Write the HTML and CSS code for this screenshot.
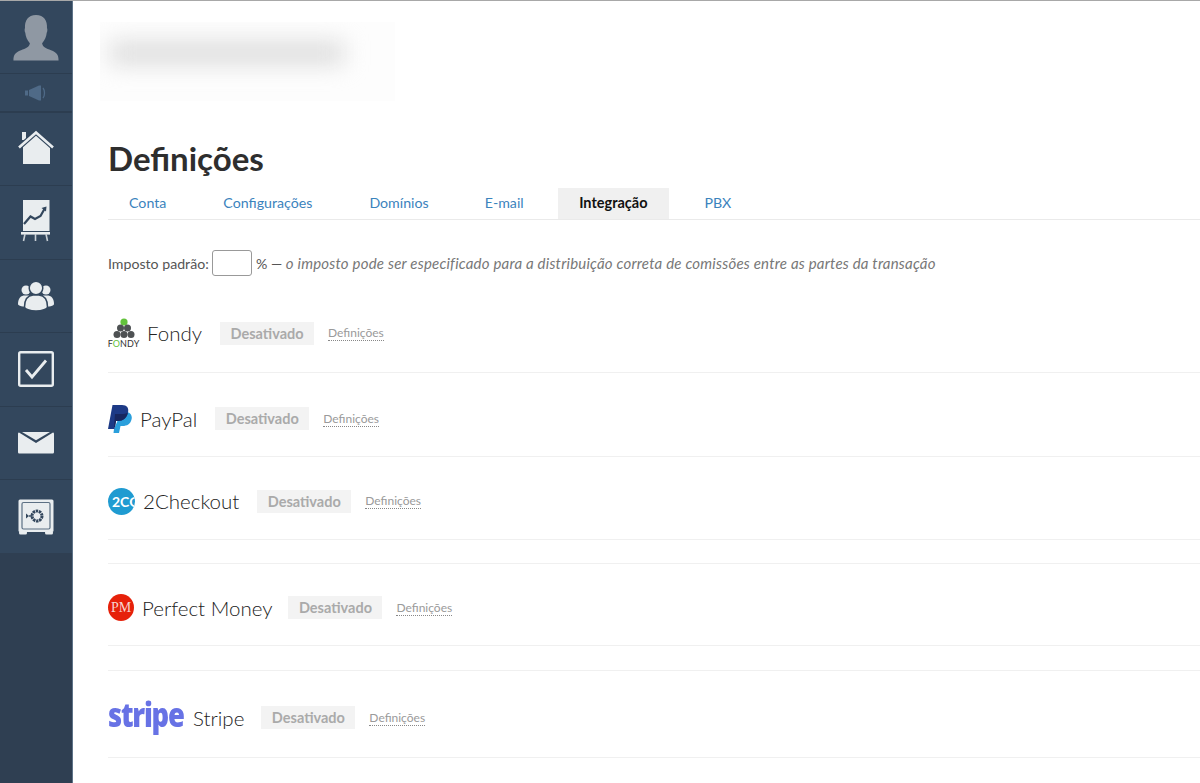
FILE: index.html
```html
<!DOCTYPE html>
<html lang="pt">
<head>
<meta charset="utf-8">
<title>Definições</title>
<link rel="stylesheet" href="styles.css">
</head>
<body>
<div class="page">
  <nav class="sidebar">
    <div class="nav-item avatar">
      <svg width="48" height="47" viewBox="0 0 50 50"><path fill="#8f98a3" d="M1 49.500C1 43 3 41 9 38.500C14 36.500 18 35 18.500 31C15.500 28 14 24 13.600 20C12.800 19 12.700 16 13.300 15C12.800 7 16.500 1 25 1C33.500 1 37.200 7 36.700 15C37.300 16 37.200 19 36.400 20C36 24 34.500 28 31.500 31C32 35 36 36.500 41 38.500C47 41 49 43 49 49.500Z"/></svg>
    </div>
    <div class="nav-item speaker">
      <svg width="24" height="16" viewBox="0 0 24 16"><g fill="#4f6a87"><rect x="1" y="5.500" width="3" height="5"/><path d="M5 5L15 0.500H17V15.500H15L5 11Z"/></g><path d="M19 3C21 5.500 21 10.500 19 13" fill="none" stroke="#4f6a87" stroke-width="1.300"/></svg>
    </div>
    <div class="nav-item home">
      <svg width="38" height="38" viewBox="0 0 38 38"><g fill="#e9edef"><rect x="5" y="2" width="4" height="8"/><path d="M19 4L33 16.500V34H6V16.500Z"/></g><path d="M1.500 18L19 2.500L36.500 18" fill="none" stroke="#33475d" stroke-width="5"/><path d="M2 17.500L19 2.500L36 17.500" fill="none" stroke="#e9edef" stroke-width="2.600"/></svg>
    </div>
    <div class="nav-item chart">
      <svg width="30" height="44" viewBox="0 0 30 44"><rect x="2" y="0" width="26.500" height="31" fill="#e9edef"/><path d="M3 24L9.500 16.500L14 19L19.500 16L24 8" fill="none" stroke="#33475d" stroke-width="2.200"/><path d="M20.500 8L25.500 6.500L25 11.500Z" fill="#33475d"/><rect x="0" y="32" width="29" height="2.600" fill="#e9edef"/><path d="M4 34L2.500 41M14.500 34V41M25 34L26.500 41" stroke="#c9d0d6" stroke-width="1.600" fill="none"/></svg>
    </div>
    <div class="nav-item people">
      <svg width="36" height="32" viewBox="0 0 36 32"><g fill="#e9edef"><circle cx="8" cy="10" r="4.500"/><circle cx="28" cy="10" r="4.500"/><path d="M0 24C0 18 3 15.500 7 15.500H11V27C5 27 0 26 0 24Z"/><path d="M36 24C36 18 33 15.500 29 15.500H25V27C31 27 36 26 36 24Z"/></g><g fill="#e9edef" stroke="#33475d" stroke-width="1.500"><circle cx="18" cy="8" r="6.800"/><path d="M6.500 27C6.500 19 10 15.500 15 15H21C26 15.500 29.500 19 29.500 27C29.500 29 24 31 18 31C12 31 6.500 29 6.500 27Z"/></g></svg>
    </div>
    <div class="nav-item check">
      <svg width="36" height="36" viewBox="0 0 36 36"><rect x="1.200" y="1.200" width="33.600" height="33.600" rx="1.500" fill="none" stroke="#e9edef" stroke-width="2.400"/><path d="M8 19L14 26L28 9.500" fill="none" stroke="#e9edef" stroke-width="2.800"/></svg>
    </div>
    <div class="nav-item mail">
      <svg width="36" height="22" viewBox="0 0 36 22"><path fill="#e9edef" d="M1 0.500L18 11L35 0.500C35.500 0.500 36 1 36 2V20C36 21 35.300 21.500 34.500 21.500H1.500C0.700 21.500 0 21 0 20V2C0 1 0.500 0.500 1 0.500Z"/><path fill="#e9edef" d="M4 0H32L18 8.200Z"/></svg>
    </div>
    <div class="nav-item safe">
      <svg width="36" height="36" viewBox="0 0 36 36"><rect x="0.500" y="0.500" width="35" height="32.500" rx="1.500" fill="#e9edef"/><rect x="1" y="32" width="8" height="3.500" rx="1.500" fill="#e9edef"/><rect x="27" y="32" width="8" height="3.500" rx="1.500" fill="#e9edef"/><rect x="4" y="3.500" width="28" height="26.500" rx="1.500" fill="none" stroke="#5c7084" stroke-width="1.200"/><circle cx="19" cy="17" r="5" fill="none" stroke="#33475d" stroke-width="3" stroke-dasharray="2.400 0.700"/><path d="M8 14.500L11 17L8 19.500Z" fill="#33475d"/><rect x="11" y="16.300" width="3" height="1.400" fill="#33475d"/></svg>
    </div>
  </nav>
  <main class="content">
    <div class="blurred"><div class="blurred-band"></div></div>
    <h1 class="title">Definições</h1>
    <ul class="tabs">
      <li class="tab">Conta</li>
      <li class="tab">Configurações</li>
      <li class="tab">Domínios</li>
      <li class="tab">E-mail</li>
      <li class="tab active">Integração</li>
      <li class="tab">PBX</li>
    </ul>
    <p class="tax">Imposto padrão: <span class="tax-input"></span> % — <em>o imposto pode ser especificado para a distribuição correta de comissões entre as partes da transação</em></p>

    <section class="row row-fondy">
      <span class="logo fondy-logo">
        <svg width="22" height="21" viewBox="0 0 22 21"><circle cx="11" cy="4" r="3.600" fill="#63c23c"/><g fill="#4e5153"><circle cx="7.500" cy="10" r="3.500"/><circle cx="14.500" cy="10" r="3.500"/><circle cx="4" cy="16.500" r="3.500"/><circle cx="11" cy="16.500" r="3.500"/><circle cx="18" cy="16.500" r="3.500"/></g></svg>
        <span class="fondy-word">F<b>O</b>NDY</span>
      </span>
      <span class="name">Fondy</span><span class="badge">Desativado</span><a class="link">Definições</a>
    </section>

    <section class="row row-paypal">
      <svg class="logo" width="24" height="28" viewBox="0 0 24 28"><path fill="#2a9fdc" d="M19 7C23 8 24.500 11 23.500 14.500C22.500 19 19 21 14.500 21H12.500L11 28H5.500L6 24L12 10Z"/><path fill="#1d3a86" d="M4.500 0H14C19 0 21 3 20 7.500C19 13 15 16 10 16H8L6.500 24H0Z"/><path fill="#18275f" d="M7 9H14C16 9 18 8.500 19.700 8C18.800 13 15 16 10 16H8L7 22H6Z"/></svg>
      <span class="name">PayPal</span><span class="badge">Desativado</span><a class="link">Definições</a>
    </section>

    <section class="row row-2co">
      <span class="logo circle co-logo"><span>2CO</span></span>
      <span class="name">2Checkout</span><span class="badge">Desativado</span><a class="link">Definições</a>
    </section>
    <div class="spacer"></div>

    <section class="row row-pm">
      <span class="logo circle pm-logo">PM</span>
      <span class="name">Perfect Money</span><span class="badge">Desativado</span><a class="link">Definições</a>
    </section>
    <div class="spacer"></div>

    <section class="row row-stripe">
      <span class="logo stripe-logo">stripe</span>
      <span class="name">Stripe</span><span class="badge">Desativado</span><a class="link">Definições</a>
    </section>
  </main>
</div>
</body>
</html>
```
FILE: styles.css
```css
* { box-sizing: border-box; }
html, body { margin: 0; height: 100%; }
body {
  background: #fff;
  font-family: "Lato", "Liberation Sans", sans-serif;
  color: #333;
  overflow: hidden;
  border-top: 1px solid #a8a8a8;
}
.page { display: flex; height: 782px; }
.sidebar {
  flex: 0 0 73px;
  background: #2f3f52;
  border-right: 1px solid #5e7388;
}
.nav-item {
  display: flex;
  align-items: center;
  justify-content: center;
  height: 73.500px;
  background: #33475d;
  border-bottom: 1px solid #2c3d50;
}
.avatar { height: 73px; }
.speaker { height: 39px; border-bottom: 2px solid #2c3d50; }
.home { height: 73px; }
.safe { height: 73px; border-bottom: 0; }
.content { flex: 1; padding-left: 35px; min-width: 0; }

.blurred {
  margin: 21px 0 0 -8px;
  width: 295px;
  height: 79px;
  background: #fdfdfd;
  overflow: hidden;
  padding: 19px 0 0 10px;
}
.blurred-band {
  width: 234px;
  height: 24px;
  background: #dedede;
  filter: blur(11px);
}
.title {
  margin: 38px 0 0;
  font-size: 33px;
  line-height: 38px;
  font-weight: 700;
  color: #2e2e2e;
}
.tabs {
  list-style: none;
  display: flex;
  margin: 11px 0 0;
  padding: 0;
  height: 32px;
  border-bottom: 1px solid #eaeaea;
}
.tab {
  padding: 0 21px;
  margin-right: 15px;
  height: 31px;
  line-height: 30px;
  font-size: 14.200px;
  color: #3b83bd;
}
.tab:nth-child(3) { margin-right: 14px; }
.tab:nth-child(4) { margin-right: 13.500px; }
.tab.active { background: #f0f0f0; font-weight: 700; font-size: 14.500px; color: #111; }

.tax {
  margin: 30px 0 0;
  height: 26px;
  display: flex;
  align-items: center;
  white-space: pre;
  font-size: 14.150px;
  color: #555;
}
.tax-input {
  display: inline-block;
  width: 40px;
  height: 26px;
  border: 1px solid #999;
  border-radius: 3px;
  background: #fff;
}
.tax em { color: #777; font-size: 15px; letter-spacing: 0.210px; }

.row {
  display: flex;
  align-items: center;
  border-bottom: 1px solid #f0f0f0;
}
.row-fondy { height: 97px; padding-top: 18px; }
.row-paypal { height: 84px; padding-top: 8px; }
.row-2co { height: 83px; padding-top: 6px; }
.row-pm { height: 82px; padding-top: 6px; }
.row-stripe { height: 87px; padding-top: 7px; }
.spacer { height: 24px; border-bottom: 1px solid #f0f0f0; }
.row-pm + .spacer { height: 25px; }

.logo { flex: none; }
.name { font-size: 20.500px; color: #222; margin-left: 8px; margin-right: 18px; font-weight: 300; }
.row-pm .name { margin-right: 16px; }
.row-stripe .name { margin-right: 17px; }
.badge {
  background: #f3f3f3;
  color: #aaa;
  font-weight: 700;
  font-size: 14.500px;
  line-height: 23px;
  padding: 0 10.500px;
}
.link {
  margin-left: 14px;
  color: #9a9a9a;
  font-size: 12px;
  line-height: 15px;
  border-bottom: 1px dotted #888;
}
.fondy-logo { width: 31px; display: flex; flex-direction: column; align-items: center; }
.fondy-word { font-size: 9px; line-height: 10px; color: #333; letter-spacing: 0.100px; }
.fondy-word b { color: #63c23c; font-weight: 400; }
.circle {
  display: flex;
  align-items: center;
  justify-content: center;
  width: 27px;
  height: 27px;
  border-radius: 50%;
  overflow: hidden;
  color: #fff;
}
.co-logo { background: #1f9bd1; font-size: 14px; font-weight: 700; justify-content: flex-start; padding-left: 4px; }
.pm-logo { width: 26px; background: #e6210a; font-family: "Liberation Serif", serif; font-size: 14px; color: #f6d5cf; }
.stripe-logo {
  width: 77px;
  margin-top: -6px;
  font-family: "Open Sans", sans-serif;
  font-weight: 800;
  font-size: 33px;
  line-height: 36px;
  letter-spacing: -1.500px;
  color: #6772e5;
  transform: scaleX(0.830);
  transform-origin: left center;
}
```
